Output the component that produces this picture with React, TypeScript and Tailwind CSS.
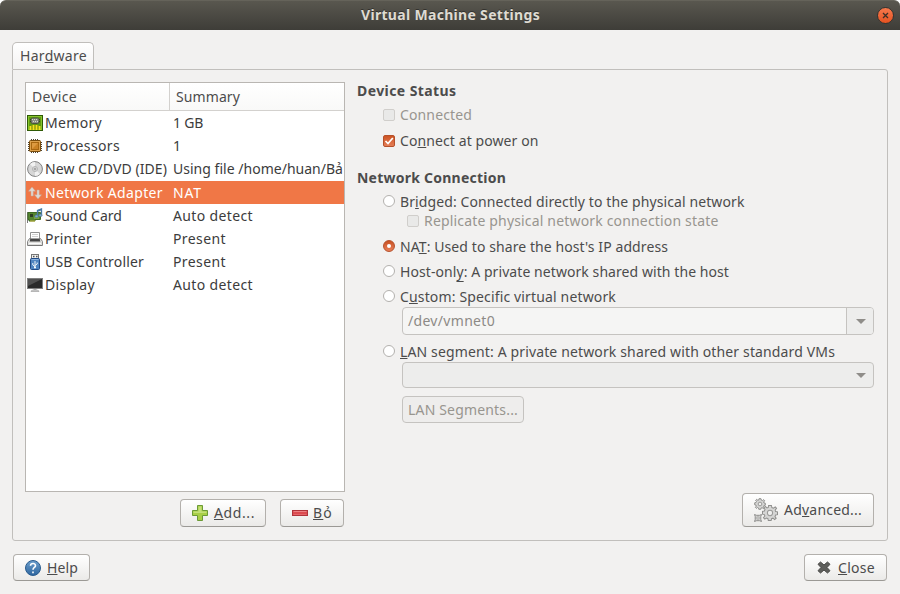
import React, { useLayoutEffect, useRef } from "react";

type LabelProps = { text: string; w: number; className?: string; low?: boolean };

// Text label; an underscore marks the mnemonic letter, w is the advance width of the label.
function Label({ text, w, className = "", low = false }: LabelProps) {
  const ref = useRef<HTMLSpanElement>(null);
  const at = text.indexOf("_");
  const plain = text.replace("_", "");
  useLayoutEffect(() => {
    const el = ref.current;
    if (!el) return;
    el.style.letterSpacing = "0px";
    const natural = el.getBoundingClientRect().width;
    el.style.letterSpacing = `${(w - natural) / plain.length}px`;
  }, [w, plain]);
  return (
    <span ref={ref} className={`inline-block shrink-0 whitespace-pre ${className}`}>
      {at < 0 ? (
        plain
      ) : (
        <>
          {plain.slice(0, at)}
          <span
            className={`underline decoration-1 [text-decoration-skip-ink:none] ${low ? "underline-offset-[4px]" : "underline-offset-[1px]"}`}
          >
            {plain[at]}
          </span>
          {plain.slice(at + 1)}
        </>
      )}
    </span>
  );
}

const icon = "block h-4 w-4 shrink-0";

const MemoryIcon = () => (
  <svg viewBox="0 0 16 16" className={icon}>
    <rect x=".5" y=".5" width="15" height="15" fill="#5f9a12" stroke="#2f5a06" />
    <rect x="1.5" y="1.5" width="13" height="13" fill="none" stroke="#86c42c" />
    <rect x="4" y="3" width="8" height="5.500" rx="1.500" fill="#8d9284" stroke="#4a5240" />
    <path d="M3 4.500h1M3 6.500h1M12 4.500h1M12 6.500h1" stroke="#33402a" />
    <path d="M5 4.500h1m1 0h1m1 0h1M6 6.500h1m1 0h1m1 0h1" stroke="#d4d7cc" />
    <path d="M3.500 11v4M6.500 10v5M9.500 10v5M12.500 11v4" stroke="#f5e31c" strokeWidth="2" />
    <path d="M5 10v5M8 10v5M11 10v5" stroke="#a5a50b" />
  </svg>
);

const CpuIcon = () => (
  <svg viewBox="0 0 16 16" className={icon}>
    <path
      d="M4.500 1v14M6.500 1v14M8.500 1v14M10.500 1v14M12.500 2v12M1 4.500h14M1 6.500h14M1 8.500h14M1 10.500h14M1 12.500h14"
      stroke="#4b4334"
      strokeWidth="1"
    />
    <rect x="2.500" y="2.500" width="11" height="11" rx="1" fill="#dba04c" stroke="#7a4c0c" />
    <rect x="4.500" y="4.500" width="7" height="7" fill="#cb8224" stroke="#a8660f" />
    <path d="M5 5h6L5 11z" fill="#dd9a40" />
  </svg>
);

const DiscIcon = () => (
  <svg viewBox="0 0 16 16" className={icon}>
    <circle cx="8" cy="8" r="7.400" fill="#d6d6d6" stroke="#808080" />
    <path d="M8 8L3 3a7 7 0 0 1 5-2zM8 8l5 5a7 7 0 0 1-5 2z" fill="#f1f1f1" />
    <circle cx="8" cy="8" r="2.500" fill="#eee" stroke="#a4a4a4" strokeWidth=".8" />
    <circle cx="8" cy="8" r="1" fill="#fff" stroke="#777" strokeWidth=".8" />
  </svg>
);

const NetworkIcon = () => (
  <svg viewBox="0 0 16 16" className={icon}>
    <path d="M5 2L1.500 6.200H4V11h2.200V6.200h2.300z" fill="#dedbd4" stroke="#c9a594" strokeWidth=".5" />
    <path d="M11 14l3.500-4.200H12.200V5H10v4.800H7.500z" fill="#dedbd4" stroke="#c9a594" strokeWidth=".5" />
  </svg>
);

const SoundIcon = () => (
  <svg viewBox="0 0 16 16" className={icon}>
    <path d="M.5 4v11" stroke="#777" />
    <path d="M1 4.500h12.500v7H8v1.500H2v-1.500H1z" fill="#55852f" stroke="#3f6a24" />
    <rect x="3" y="6" width="3" height="3" fill="#2d3d24" />
    <path d="M7 10h5" stroke="#9dbd58" />
    <path d="M3 13h5" stroke="#cdbb47" />
    <path d="M10.500 8V2.500L14.500 1v6" fill="none" stroke="#4a7ba5" strokeWidth="1.300" />
    <path d="M10.500 3l4-1.500" stroke="#4a7ba5" strokeWidth="1.800" />
    <ellipse cx="9.500" cy="8.300" rx="1.600" ry="1.300" fill="#7fa6c8" stroke="#44739c" strokeWidth=".6" />
    <ellipse cx="13.500" cy="7.300" rx="1.600" ry="1.300" fill="#7fa6c8" stroke="#44739c" strokeWidth=".6" />
  </svg>
);

const PrinterIcon = () => (
  <svg viewBox="0 0 16 16" className={icon}>
    <path d="M2.500 7.500h11l2 3v4H.5v-4z" fill="#dededc" stroke="#858585" strokeLinejoin="round" />
    <path d="M3.500 1.500h9v7h-9z" fill="#fff" stroke="#929292" />
    <path d="M5 3.500h6M5 5.500h6" stroke="#d0d0d0" />
    <path d="M3.500 7.500h9l.8 3H2.700z" fill="#454545" />
    <path d="M2 12.500h12" stroke="#fafafa" />
    <path d="M1 14.500h14" stroke="#777" />
  </svg>
);

const UsbIcon = () => (
  <svg viewBox="0 0 16 16" className={icon}>
    <rect x="4.500" y=".5" width="7" height="5" fill="#f1f1ef" stroke="#777" />
    <path d="M6 2.500h1.500M9 2.500h1.500" stroke="#555" strokeWidth="1.400" />
    <rect x="3.500" y="4.500" width="9" height="11" rx="1" fill="#4f84c0" stroke="#204a87" />
    <path d="M4.500 5.500h7" stroke="#8fb5df" />
    <path d="M8 7v7M8 12.500L5.800 11V9M8 11.500l2.200-1.500V8.500" fill="none" stroke="#fff" strokeWidth=".9" />
    <circle cx="8" cy="13.500" r="1" fill="#fff" />
  </svg>
);

const DisplayIcon = () => (
  <svg viewBox="0 0 16 16" className={icon}>
    <rect x=".5" y="1.500" width="15" height="10" fill="#2a2a2a" stroke="#808080" />
    <path d="M1 2h14L1 9z" fill="#505050" />
    <path d="M6.500 12h3v1.500h-3z" fill="#b8b8b8" />
    <path d="M4 14.500c0-1 1-1.500 4-1.500s4 .5 4 1.500z" fill="#d7d7d7" stroke="#a0a0a0" strokeWidth=".7" />
  </svg>
);

const AddIcon = () => (
  <svg viewBox="0 0 16 16" className={icon}>
    <path d="M5.500.5h5v5h5v5h-5v5h-5v-5h-5v-5h5z" fill="#a9cf46" stroke="#6b9a35" />
    <path d="M6.500 1.500h3v5h5v1.500h-13V6.500h5z" fill="#cbe486" opacity=".8" />
  </svg>
);

const RemoveIcon = () => (
  <svg viewBox="0 0 16 16" className={icon}>
    <rect x=".5" y="5.500" width="15" height="5" fill="#dc4b50" stroke="#b0343b" />
    <path d="M1.500 6.500h13" stroke="#ee8285" />
    <path d="M1.500 9.500h13" stroke="#e5666a" />
  </svg>
);

const HelpIcon = () => (
  <svg viewBox="0 0 16 16" className={icon}>
    <defs>
      <linearGradient id="help" x1="0" y1="0" x2="0" y2="1">
        <stop offset="0" stopColor="#6d9fcd" />
        <stop offset="1" stopColor="#2d659e" />
      </linearGradient>
    </defs>
    <circle cx="8" cy="8" r="7.500" fill="url(#help)" stroke="#2a5c8f" />
    <path d="M5.500 5.700C5.600 2.800 10.500 2.800 10.500 5.700c0 1.700-2.500 1.900-2.500 4M8 11.500v1.700" fill="none" stroke="#fff" strokeWidth="1.600" />
  </svg>
);

const CrossIcon = () => (
  <svg viewBox="0 0 16 16" className={icon}>
    <path
      d="M4.500 2L8 5 11.500 2 14 4.300 11 7.500l3 3.200-2.500 2.300L8 10 4.500 13 2 10.700 5 7.500 2 4.300z"
      fill="#5e5e5b"
      stroke="#484846"
      strokeLinejoin="round"
    />
  </svg>
);

function Gear({ x, y, r }: { x: number; y: number; r: number }) {
  return (
    <g transform={`translate(${x} ${y}) scale(${r / 8})`}>
      <path
        d="M-1.500-8h3l.5 2.200 1.700.7L5.600-6.600 7-5 5.500-3l.5 1.500 2 .3v3l-2 .4-.7 1.600L6.600 5.500 5 7 3.200 5.500 1.700 6 1.200 8h-3L-2.200 6l-1.500-.7L-5.500 6.600-7 5l1.500-1.800L-6 1.700-8 1.200v-3l2-.4.7-1.500L-6.600-5.500-5-7l1.800 1.500 1.400-.5z"
        fill="#d5d5d4"
        stroke="#8f8f8d"
        strokeWidth={8 / r}
      />
      <circle r="2.800" fill="#efefee" stroke="#9a9a98" strokeWidth={8 / r} />
    </g>
  );
}

const GearsIcon = () => (
  <svg viewBox="0 0 24 24" className="block h-6 w-6 shrink-0">
    <Gear x={6} y={6} r={5.3} />
    <Gear x={16} y={15} r={7.5} />
    <path
      d="M.5 16.500l2 .8h3l2-.8-.7 2v3l.7 2-2-.8h-3l-2 .8.7-2v-3z"
      fill="#cfcfce"
      stroke="#8f8f8d"
      strokeLinejoin="round"
    />
    <circle cx="4" cy="20" r="1.200" fill="#efefee" stroke="#9a9a98" strokeWidth=".8" />
  </svg>
);

const devices = [
  { Icon: MemoryIcon, name: "Memory", w: 57, summary: "1 GB", sw: 30 },
  { Icon: CpuIcon, name: "Processors", w: 75, summary: "1", sw: 8 },
  { Icon: DiscIcon, name: "New CD/DVD (IDE)", w: 122, summary: "Using file /home/huan/Bả", sw: 170 },
  { Icon: NetworkIcon, name: "Network Adapter", w: 118, summary: "NAT", sw: 29, selected: true },
  { Icon: SoundIcon, name: "Sound Card", w: 77, summary: "Auto detect", sw: 80 },
  { Icon: PrinterIcon, name: "Printer", w: 47, summary: "Present", sw: 53 },
  { Icon: UsbIcon, name: "USB Controller", w: 99, summary: "Present", sw: 53 },
  { Icon: DisplayIcon, name: "Display", w: 50, summary: "Auto detect", sw: 80 },
];

function Button({ className, children }: { className: string; children: React.ReactNode }) {
  return (
    <button
      className={`flex shrink-0 items-center rounded-[4px] border border-[#b3b0ac] border-b-[#9b9995] bg-linear-to-b from-white to-[#ebeae8] ${className}`}
    >
      {children}
    </button>
  );
}

function Radio({ on = false }: { on?: boolean }) {
  return on ? (
    <span className="-mt-0.5 flex h-3 w-3 shrink-0 items-center justify-center rounded-full border border-[#b5502b] bg-linear-to-b from-[#c8501f] to-[#e98058]">
      <span className="h-1 w-1 rounded-full bg-white" />
    </span>
  ) : (
    <span className="-mt-0.5 h-3 w-3 shrink-0 rounded-full border border-[#b3b1ae] bg-white" />
  );
}

const EmptyCheck = () => <span className="h-3 w-3 shrink-0 rounded-[2px] border border-[#d0cecb] bg-[#e9e9e8]" />;

const Arrow = () => (
  <svg viewBox="0 0 10 5" className="block h-[5px] w-[10px] shrink-0">
    <path d="M0 0h10L5 5z" fill="#8f8d89" />
  </svg>
);

function Option({ text, w, on, low, className }: { text: string; w: number; on?: boolean; low?: boolean; className: string }) {
  return (
    <div className={`flex h-5 items-center gap-[5px] pl-[26px] ${className}`}>
      <Radio on={on} />
      <Label text={text} w={w} low={low} />
    </div>
  );
}

export default function App() {
  return (
    <div className="h-[594px] w-[900px] overflow-hidden bg-white font-['Noto_Sans','Open_Sans',sans-serif] text-[14px] leading-[20px] text-[#4c4c4c]">
      <div className="flex h-full flex-col rounded-t-[6px] bg-[#f2f1f0]">
        <header className="flex h-[30px] shrink-0 items-center rounded-t-[6px] border-t border-[#65635a] bg-linear-to-b from-[#59574f] to-[#3e3d38] pr-[6px] pb-[2px] pl-[361px]">
          <Label
            text="Virtual Machine Settings"
            w={179}
            className="font-bold text-[#dfdbd2] [text-shadow:0_-1px_0_#33322e]"
          />
          <span className="mt-px ml-auto flex h-[17px] w-[17px] items-center justify-center rounded-full border border-[#35332f] bg-linear-to-b from-[#f5794c] to-[#e5521f]">
            <svg viewBox="0 0 7 7" className="h-[7px] w-[7px]">
              <path d="M1 1l5 5M6 1L1 6" stroke="#3b2f27" strokeWidth="1.300" />
            </svg>
          </span>
        </header>

        <main className="flex flex-col px-3 pt-3">
          <div className="flex h-[27px] w-[82px] items-center rounded-t-[5px] border border-b-0 border-[#c0bebb] bg-linear-to-b from-white to-[#f4f3f2] pl-[7px]">
            <Label text="Har_dware" w={67} />
          </div>
          <div className="flex h-[472px] rounded-[3px] rounded-tl-none border border-[#c1bfbc]">
            <section className="w-[332px] shrink-0 pt-3 pl-3">
              <div className="h-[410px] w-[320px] border border-[#b9b6b2] bg-white">
                <div className="flex h-7 items-center border-b border-[#d3d1ce] bg-linear-to-b from-white to-[#f9f9f8]">
                  <div className="flex h-full w-[144px] items-center border-r border-[#d3d1ce] pl-[6px]">
                    <Label text="Device" w={45} />
                  </div>
                  <div className="pl-[6px]">
                    <Label text="Summary" w={64} />
                  </div>
                </div>
                <div>
                  {devices.map(({ Icon, name, w, summary, sw, selected }) => (
                    <div
                      key={name}
                      className={`flex h-[23px] items-center pl-px ${selected ? "mt-px bg-[#f07746] text-white" : "text-[#3c3c3c]"}`}
                    >
                      <div className="flex w-[146px] shrink-0 items-center gap-[2px]">
                        <Icon />
                        <Label text={name} w={w} />
                      </div>
                      <Label text={summary} w={sw} />
                    </div>
                  ))}
                </div>
              </div>
              <div className="flex justify-end gap-[14px] pt-[7px] pr-px">
                <Button className="h-7 w-[86px] gap-[6px] pl-[11px]">
                  <AddIcon />
                  <Label text="_Add..." w={41} />
                </Button>
                <Button className="h-7 w-[64px] gap-[5px] pl-[11px]">
                  <RemoveIcon />
                  <Label text="_Bỏ" w={20} />
                </Button>
              </div>
            </section>

            <section className="flex flex-1 flex-col pr-[13px] pl-3">
              <div className="mt-[11px] h-5">
                <Label text="Device Status" w={99.500} className="font-bold" />
              </div>
              <div className="mt-1 flex h-5 items-center gap-[5px] pl-[26px] text-[#98958f]">
                <EmptyCheck />
                <Label text="Connected" w={72} />
              </div>
              <div className="mt-1.5 flex h-5 items-center gap-[5px] pl-[26px]">
                <span className="flex h-3 w-3 shrink-0 items-center justify-center rounded-[2px] border border-[#b5502b] bg-linear-to-b from-[#cd5422] to-[#e47d55]">
                  <svg viewBox="0 0 10 10" className="h-2.5 w-2.5 shrink-0">
                    <path d="M1.500 5l2.500 2.500L8.800 2" fill="none" stroke="#fff" strokeWidth="1.700" />
                  </svg>
                </span>
                <Label text="Co_nnect at power on" w={138.500} />
              </div>
              <div className="mt-[17px] h-5">
                <Label text="Network Connection" w={149} className="font-bold" />
              </div>
              <Option className="mt-1" text="Br_idged: Connected directly to the physical network" w={344.500} />
              <div className="flex h-[18px] items-center gap-[5px] pl-[50px] text-[#98958f]">
                <EmptyCheck />
                <Label text="Replicate physical network connection state" w={294.500} />
              </div>
              <Option className="mt-[7px]" text="NA_T: Used to share the host's IP address" w={268} on />
              <Option className="mt-[5px]" text="Host-onl_y: A private network shared with the host" w={329} low />
              <Option className="mt-[5px]" text="C_ustom: Specific virtual network" w={216} />
              <div className="ml-[45px] flex h-7 rounded-[4px] border border-[#c5c3c0] bg-[#f5f5f4] text-[#8d8a86]">
                <div className="flex flex-1 items-center pl-[5px]">
                  <Label text="/dev/vmnet0" w={87} />
                </div>
                <div className="flex w-[27px] items-center justify-end rounded-r-[3px] border-l border-[#c5c3c0] bg-[#ededec] pr-[7px]">
                  <Arrow />
                </div>
              </div>
              <Option className="mt-[7px]" text="_LAN segment: A private network shared with other standard VMs" w={435} />
              <div className="ml-[45px] flex h-[26px] items-center justify-end rounded-[4px] border border-[#c5c3c0] bg-[#ededec] pr-[7px]">
                <Arrow />
              </div>
              <div className="mt-2 ml-[45px] flex h-[27px] w-[122px] items-center rounded-[4px] border border-[#c5c3c0] bg-[#eeedec] pl-[5px] text-[#98958f]">
                <Label text="LAN Segments..." w={110} />
              </div>
              <div className="mt-auto mb-[13px] flex justify-end">
                <Button className="h-[34px] w-[132px] gap-[6px] pl-[11px]">
                  <GearsIcon />
                  <Label text="Ad_vanced..." w={78} />
                </Button>
              </div>
            </section>
          </div>
        </main>

        <footer className="flex justify-between pt-[13px] pr-[13px] pl-[13px]">
          <Button className="h-[27px] w-[77px] gap-[6px] pl-[11px]">
            <HelpIcon />
            <Label text="_Help" w={31} />
          </Button>
          <Button className="h-[27px] w-[83px] gap-[6px] pl-[11px]">
            <CrossIcon />
            <Label text="_Close" w={37} />
          </Button>
        </footer>
      </div>
    </div>
  );
}
